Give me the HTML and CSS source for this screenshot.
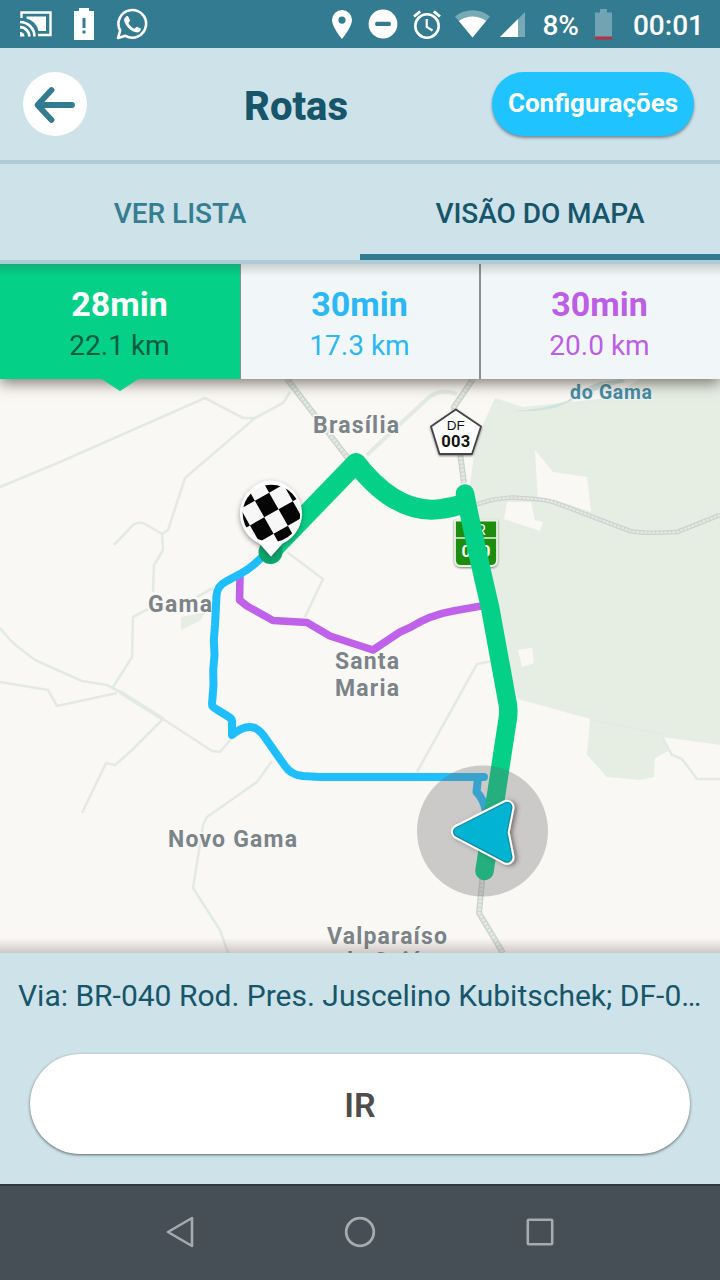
FILE: index.html
```
<!DOCTYPE html>
<html lang="pt-BR">
<head>
<meta charset="utf-8">
<title>Rotas</title>
<link rel="stylesheet" href="styles.css">
</head>
<body>
<div class="screen">
  <div class="status">
    <div class="status-left">
      <svg width="32" height="28" viewBox="0 0 32 28" fill="none" stroke="#fff" stroke-width="2.400"><path d="M1.500 8V2.500H30.500V25H18"/><path d="M6.500 6.500H26V21H18.500A17 17 0 0 0 6.500 8.500Z" fill="#fff" stroke="none"/><path d="M0 12A14.500 14.500 0 0 1 14.500 26.500M0 17.200A9.300 9.300 0 0 1 9.300 26.500" stroke-width="2.700"/><path d="M0 22A4.500 4.500 0 0 1 4.500 26.500H0Z" fill="#fff" stroke="none"/></svg>
      <svg width="22" height="32" viewBox="0 0 22 32"><path fill="#fff" d="M1 3H6V0H16V3H21V32H1Z"/><path d="M9.500 10H12.500V20H9.500ZM9.500 22.500H12.500V25.500H9.500Z" fill="#327b91"/></svg>
      <svg width="32" height="32" viewBox="0 0 32 32"><path d="M2 30L4.200 22.500A13.800 13.800 0 1 1 9.400 27.800Z" fill="none" stroke="#fff" stroke-width="2.600" stroke-linejoin="round"/><path d="M10.200 8.500C11 7.900 12 8 12.400 8.800L13.900 12.300C14.200 13.200 12.800 14.300 12.400 15C14 18 16 19.800 18.800 20.800C19.700 20.100 20.400 18.600 21.300 18.900L24.600 20.500C25.400 21 24.500 23 23.200 24C20 25.400 15.500 22.800 13.200 20.700C10.500 18.200 8 14.500 8.100 12C8.200 10.500 9 9.200 10.200 8.500Z" fill="#fff"/></svg>
    </div>
    <div class="status-right">
      <svg class="pin" width="20" height="29" viewBox="0 0 20 29"><path fill="#fff" fill-rule="evenodd" d="M10 0A10 10 0 0 1 20 10C20 17 10 29 10 29S0 17 0 10A10 10 0 0 1 10 0ZM10 6.500A3.600 3.600 0 1 0 10 13.700A3.600 3.600 0 1 0 10 6.500Z"/></svg>
      <svg class="dnd" width="30" height="30" viewBox="0 0 30 30"><circle cx="15" cy="15" r="14.400" fill="#fff"/><rect x="7.200" y="12.700" width="15.600" height="4.200" rx="1.500" fill="#327b91"/></svg>
      <svg class="alarm" width="28" height="29" viewBox="0 0 28 29" fill="none" stroke="#fff"><circle cx="14" cy="16" r="11.700" stroke-width="2.600"/><path d="M1 6.500L7.200 1.400M27 6.500L20.800 1.400" stroke-width="2.800"/><path d="M13.700 9V17L19.500 20.500" stroke-width="2.200"/></svg>
      <svg class="wifi" width="35" height="28" viewBox="0 0 36 28"><path d="M18 28L0 6.200A29 29 0 0 1 36 6.200Z" fill="#79a9b7"/><path d="M18 28L4 11A23 23 0 0 1 32 11Z" fill="#fff"/></svg>
      <svg class="cell" width="25" height="25" viewBox="0 0 25 25"><path d="M0 25L25 0V25Z" fill="#79a9b7"/><path d="M0 25L18 7V25Z" fill="#fff"/></svg>
      <span class="pct">8%</span>
      <svg class="bat" width="18" height="31" viewBox="0 0 18 31"><path d="M0 3.500H5V0H12V3.500H17V28H0Z" fill="#70a4b3"/><path d="M0 27.500H17V30.500H0Z" fill="#b52f45"/></svg>
      <span class="clock">00:01</span>
    </div>
  </div>

  <header class="header">
    <div class="back"><svg width="64" height="64" viewBox="0 0 64 64" fill="none" stroke="#327b91" stroke-width="5.800" stroke-linecap="round" stroke-linejoin="round"><path d="M49 33H15M28.500 18L14.500 33L28.500 48"/></svg></div>
    <div class="title">Rotas</div>
    <div class="settings">Configurações</div>
  </header>

  <nav class="tabs">
    <div class="tab">VER LISTA</div>
    <div class="tab tab-active">VISÃO DO MAPA</div>
  </nav>

  <div class="routes">
    <div class="route route-green"><b>28min</b><span>22.1 km</span><i class="notch"></i></div>
    <div class="route route-blue"><b>30min</b><span>17.3 km</span></div>
    <div class="route route-purple"><b>30min</b><span>20.0 km</span></div>
  </div>

  <div class="map">
    <svg class="map-art" width="720" height="574" viewBox="0 379 720 574">
      <defs>
        <filter id="drop" x="-30%" y="-30%" width="160%" height="160%"><feDropShadow dx="0" dy="2" stdDeviation="2.500" flood-color="#403838" flood-opacity=".55"/></filter>
        <filter id="drop-right" x="-30%" y="-30%" width="160%" height="160%"><feDropShadow dx="2.500" dy="1" stdDeviation="2" flood-color="#403838" flood-opacity=".6"/></filter>
        <filter id="glow" x="-30%" y="-30%" width="160%" height="160%"><feDropShadow dx="0" dy="1" stdDeviation="1.200" flood-color="#000" flood-opacity=".5"/></filter>
        <clipPath id="disc"><circle cx="271.500" cy="513.500" r="28.800"/></clipPath>
      </defs>
      <rect y="379" width="720" height="575" fill="#faf8f5"/>
      <path class="park" d="M495 398L523 407L607 398L640 379H720V745L662 737L668 751L655 758L654 777L640 780L607 777L587 755L590 719L518 699L503 650L468 500L476 440Z"/>
      <path class="park" d="M181 617L206 612L200 621L181 630Z"/>
      <path fill="#faf8f5" d="M535 450L553 472L587 477L591 512L565 503L538 499ZM507 502L531 502L535 520L543 522L540 531L504 519ZM518 650L532 648L534 663L522 667Z"/>
      <path fill="none" stroke="#e3e9e7" stroke-width="1.500" d="M590 719L662 734"/>
      <path fill="#cfe3df" d="M513 411Q545 409 567 401Q580 389 600 382L623 379L625 382Q596 388 569 402Q550 413 513 411Z"/>
      <g class="lane">
        <path d="M0 487L60 462L205 398L243 418L255 418L283 403L290 392M255 418L185 478L168 530L162 534L163 550L154 565L153 592M114 545L133 525Q138 521 145 524L162 534M148 609L133 617L132 657L113 687M197 597L213 588M287 552L323 579L305 617"/>
        <path d="M10 640L18 647L35 660L82 681L107 685L120 692L163 719L212 751L220 752L232 738M0 628L10 640M0 682L48 690L57 706L117 693M163 719L132 750L115 765L106 763L82 813M272 761L257 782L207 817L203 825L193 888L220 930L228 953"/>
        <path d="M492 661L477 664L417 772M662 737L672 755L682 759L697 779H720"/>
        <path d="M120 692L163 719" stroke-width="4"/>
        <path d="M457 394Q440 388 428 398L367 455" stroke-width="4"/>
      </g>
      <g>
        <g class="road"><path d="M287 379L347 457L352 464"/><path d="M473 379L454 407L464 483"/><path d="M483 872L479 913L503 953"/><path class="east" d="M475 505Q500 496 520 498Q545 499 556 503L630 531Q645 534 677 532L720 515"/></g>
        <g class="road-in"><path d="M287 379L347 457L352 464"/><path d="M473 379L454 407L464 483"/><path d="M483 872L479 913L503 953"/><path class="east-in" d="M475 505Q500 496 520 498Q545 499 556 503L630 531Q645 534 677 532L720 515"/></g>
      </g>
      <g class="place">
        <text x="313" y="433" textLength="86">Brasília</text>
        <text x="148" y="612" textLength="64">Gama</text>
        <text x="335" y="669" textLength="64">Santa</text>
        <text x="335" y="696" textLength="64">Maria</text>
        <text x="168" y="846.500" textLength="129">Novo Gama</text>
        <text x="327" y="944" textLength="120">Valparaíso</text>
        <text x="340" y="969" textLength="94">de Goiás</text>
      </g>
      <text class="water" x="570" y="399" textLength="82">do Gama</text>
      <g filter="url(#glow)"><path d="M455.800 409.500L481 426.500L472 454H439.500L431 426.500Z" fill="#fff" stroke="#444" stroke-width="1.800" stroke-linejoin="round"/></g>
      <text class="shield df" x="455.800" y="429.500" font-size="13.500">DF</text>
      <text class="shield bold" x="455.800" y="446.500" font-size="16.500" textLength="29">003</text>
      <g filter="url(#glow)"><path d="M455 520.500H497V560Q497 566 491 566H461Q455 566 455 560Z" fill="#1b8d0c" stroke="#e8f2e2" stroke-width="1.800"/></g>
      <path d="M455 538H497" stroke="#e8f2e2" stroke-width="1.600"/>
      <text class="shield white" x="476.500" y="534.500" font-size="15">BR</text>
      <text class="shield bold white" x="476" y="557" font-size="16.500" textLength="29">040</text>
      <g fill="none" stroke-linecap="round" stroke-linejoin="round">
        <path stroke="#c061ea" stroke-width="7.600" d="M240 576L239.500 600L247 606L273 620.500L307 622.500L330 636L373 650L400 632L410 627.500Q430 615 453 611L484 605.500"/>
        <path stroke="#1fbfff" stroke-width="8" d="M268 552L260 559Q250 569 240 574L226 581.500Q217 586 216.500 596L215 625L213.800 640L214.500 655L213.200 670L213.500 685L212 704Q212 707 216 709L229 717Q233 719.500 232 724V735Q245 724 255 728Q261 731 266 739L285 766Q291 775 303 776L320 777H484M478 778L476.500 792Q484 799 486 812"/>
        <path stroke="#04d088" stroke-width="20" d="M271 551L356 463Q398 517 444 508.500Q460 506 465 502"/>
        <path stroke="#04d088" stroke-width="18.500" d="M465 493.500Q471 525 490 607L507 700Q509 708 508 717L484.500 871"/>
      </g>
      <circle cx="270.500" cy="552" r="12" fill="#07a86e"/>
      <circle cx="482.500" cy="831" r="65.500" fill="#6e6969" fill-opacity=".32"/>
      <g filter="url(#drop)"><path d="M271 480.500A33 33 0 0 1 282.500 543.500L271 556.500L259.500 543.500A33 33 0 0 1 271 480.500Z" fill="#fff"/></g>
      <g clip-path="url(#disc)"><rect x="240" y="480" width="64" height="64" fill="#f7f7f7"/><g transform="translate(266.700 505) rotate(-29.500)"><path d="M-8.200 -9.500h16.400v19h-16.400zM8.200 9.500h16.400v19H8.200zM-24.600 9.500h16.400v19h-16.400zM8.200 -28.500h16.400v19H8.200zM-24.600 -28.500h16.400v19h-16.400zM24.600 -9.500h16.400v19H24.600zM-41 -9.500h16.400v19h-16.400zM-8.200 28.500h16.400v19h-16.400z" fill="#050505"/></g></g>
      <g stroke-linejoin="round" filter="url(#drop-right)">
        <path d="M458.500 831.800L507 807.300L502 832.300L507 857.300Z" fill="#fff" stroke="#fff" stroke-width="15"/>
      </g>
      <path d="M458.500 831.800L507 807.300L502 832.300L507 857.300Z" fill="#118ba5" stroke="#118ba5" stroke-width="11" stroke-linejoin="round"/>
      <path d="M458.500 831.800L507 807.300L502 832.300L507 857.300Z" fill="#03b3d2" stroke="#03b3d2" stroke-width="8.500" stroke-linejoin="round"/>
    </svg>
  </div>

  <div class="panel">
    <div class="via">Via: BR-040 Rod. Pres. Juscelino Kubitschek; DF-0…</div>
    <div class="go">IR</div>
  </div>

  <div class="navbar">
    <svg width="28" height="32" viewBox="0 0 28 32" fill="none" stroke="#a6abae" stroke-width="2.600" stroke-linejoin="round"><path d="M26 2V30L2 16Z"/></svg>
    <svg width="32" height="32" viewBox="0 0 32 32" fill="none" stroke="#a6abae" stroke-width="2.800"><circle cx="16" cy="16" r="13.800"/></svg>
    <svg width="28" height="28" viewBox="0 0 28 28" fill="none" stroke="#a6abae" stroke-width="2.600"><rect x="1.800" y="1.800" width="24.400" height="24.400" rx="1"/></svg>
  </div>
</div>
</body>
</html>
```
FILE: styles.css
```
* { box-sizing: border-box; }
body { margin: 0; font-family: Roboto, "Liberation Sans", sans-serif; }
svg { display: block; flex: none; }
.screen { width: 720px; height: 1280px; display: flex; flex-direction: column; overflow: hidden; background: #cde2e9; }

.status { height: 48px; background: #327b91; display: flex; justify-content: space-between; padding: 0 16px 0 20px; color: #fff; font-size: 28px; font-weight: 500; line-height: 40px; }
.status span { padding-top: 3px; }
.status-left { display: flex; align-items: center; gap: 21px; }
.status-right { display: flex; align-items: center; }
.dnd { margin-left: 16px; }
.alarm { margin-left: 15px; }
.wifi { margin-left: 14px; }
.cell { margin-left: 10px; }
.pct { margin-left: 17px; }
.bat { margin-left: 16px; }
.clock { margin-left: 20px; }

.header { height: 116px; border-bottom: 4px solid #adccd8; display: flex; align-items: center; justify-content: space-between; padding: 0 26px 0 23px; }
.back { width: 64px; height: 64px; border-radius: 50%; background: #fff; }
.title { font-size: 40px; font-weight: 800; color: #17566a; padding-top: 4px; margin-left: 13px; }
.settings { width: 202px; height: 64px; border-radius: 33px; background: #1fc3ff; color: #fff; font-size: 26px; font-weight: 700; line-height: 63px; text-align: center; box-shadow: 0 2px 3px rgba(70, 80, 90, .6); }

.tabs { height: 100px; border-bottom: 4px solid #adccd8; display: flex; position: relative; z-index: 3; background: #cde2e9; }
.tab { flex: 1; display: flex; align-items: center; justify-content: center; font-size: 28px; font-weight: 500; color: #357d91; padding-top: 2px; letter-spacing: -.05px; }
.tab-active { color: #17566a; border-bottom: 6px solid #327b91; padding-top: 8px; }

.routes { height: 115px; display: grid; grid-template-columns: 241px 240px 239px; position: relative; z-index: 2; background: #f1f7f8; box-shadow: 0 4px 14px rgba(60, 50, 40, .65); }
.routes::after { content: ""; position: absolute; left: 0; right: 0; top: 0; height: 12px; background: linear-gradient(rgba(50, 50, 50, .2), rgba(50, 50, 50, 0)); }
.route { display: flex; flex-direction: column; align-items: center; position: relative; padding-top: 20px; border-right: 2px solid #8a8f8f; }
.route:last-child { border-right: 0; padding-right: 2px; }
.route b { font-size: 34px; line-height: 41px; font-weight: 700; }
.route span { font-size: 28px; line-height: 41px; }
.route-green { background: #04d088; color: #fff; border-right-width: 1px; padding-right: 1px; }
.route-green span { color: #065c40; }
.route-blue { color: #2bb8f5; padding-right: 1px; }
.route-purple { color: #bd5fe6; }
.notch { position: absolute; left: 100px; top: 114px; width: 40px; height: 13px; background: #04d088; clip-path: polygon(0 0, 100% 0, 50% 100%); }

.map { height: 574px; position: relative; }
.map::after { content: ""; position: absolute; left: 0; right: 0; bottom: 0; height: 15px; background: linear-gradient(rgba(90, 75, 75, 0), rgba(90, 75, 75, .28)); }
.park { fill: #e6eee4; }
.lane { fill: none; stroke: #e3eae4; stroke-width: 2.6; stroke-linejoin: round; }
.road, .road-in { fill: none; stroke-linejoin: round; }
.road { stroke: #cbd3ce; stroke-width: 6; }
.road-in { stroke: #e3e8e3; stroke-width: 3.4; stroke-dasharray: 3 1; }
.road .east { stroke-width: 4.6; }
.road-in .east-in { stroke-width: 2.4; }
.place { font-size: 23px; font-weight: 700; fill: #7b8489; stroke: #faf8f5; stroke-width: 3px; paint-order: stroke; }
.water { font-size: 19.5px; font-weight: 700; fill: #468aa4; stroke: #eef5f4; stroke-width: 2px; paint-order: stroke; }
.shield { text-anchor: middle; fill: #111; font-weight: 400; }
.df { font-family: "Liberation Sans", sans-serif; }
.bold { font-weight: 700; }
.white { fill: #fff; }

.panel { height: 231px; background: #cde2e9; display: flex; flex-direction: column; align-items: center; gap: 36px; padding-top: 20px; }
.via { width: 684px; height: 45px; line-height: 45px; font-size: 30px; color: #17566a; white-space: nowrap; }
.go { width: 660px; height: 100px; border-radius: 50px; background: #fff; color: #4d4d4d; font-size: 34px; font-weight: 600; line-height: 103px; text-align: center; box-shadow: 0 1px 3px rgba(50, 60, 65, .75); }

.navbar { height: 96px; border-top: 2px solid #2c3841; background: #464e56; display: grid; grid-template-columns: repeat(3, 180px); justify-content: center; justify-items: center; align-items: center; padding-bottom: 2px; }
```
